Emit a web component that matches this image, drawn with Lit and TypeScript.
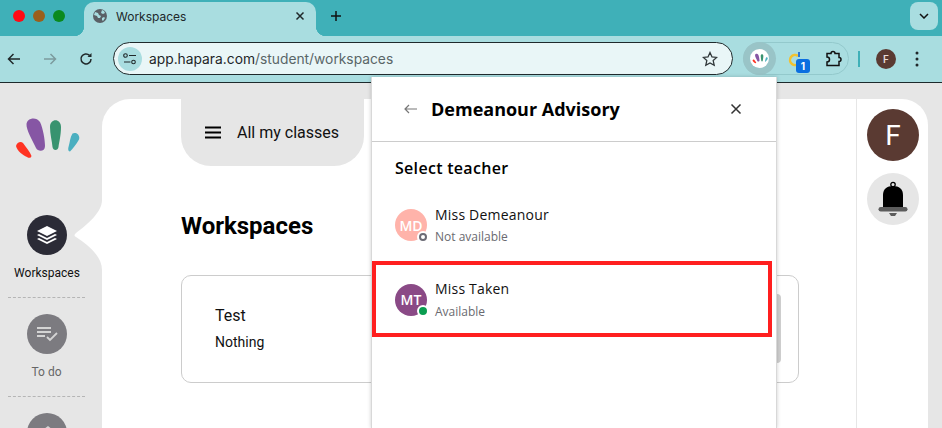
import { LitElement, html, css, svg } from "lit";
import { customElement } from "lit/decorators.js";

const logo = svg`
  <path fill="#ff3322" d="M16 146C17 142 21 141 23 143C26 147 30 152 31.5 156C31 158 29 158.5 27 157C23 155 17 151 16 146Z"/>
  <path fill="#8656a4" d="M26.5 124C27 118 36 116 40 122C43 128 45 140 45 146C45 152 38 152 36 148C33 141 26 130 26.5 124Z"/>
  <path fill="#38936f" d="M50 127C50 118 61 118 61 127C61 135 59 143 58.5 147C58 151 53 151 52.5 147C52 141 50 134 50 127Z"/>
  <path fill="#4bafc0" d="M68.500 147C70 142 70 137 72.500 133.500C76 131.500 80.500 135 79 139.500C76.500 144 72.500 149 70 151.500C68 151.500 68 149 68.500 147Z"/>`;

@customElement("app-root")
export class AppRoot extends LitElement {
  static styles = css`
    :host { display: block; width: 942px; height: 428px; overflow: hidden; position: relative; font-family: Roboto, sans-serif; background: #e6e6e6; }
    * { box-sizing: border-box; }
    svg { display: block; flex: none; }

    .strip { height: 36px; background: #3fb0b8; display: flex; align-items: flex-start; padding: 2px 4px 0 13px; }
    .dots { display: flex; gap: 8px; margin-top: 8px; width: 71px; flex: none; }
    .dot { width: 12px; height: 12px; border-radius: 50%; }
    .dot.red { background: #ff0a14; }
    .dot.amber { background: #9a5f1c; }
    .dot.green { background: #0a8a1e; }
    .tab { position: relative; width: 232px; height: 34px; background: #a9dde0; border-radius: 10px 10px 0 0; display: flex; align-items: center; padding: 0 11px 6px 9px; gap: 9px; font: 12px Inter, sans-serif; color: #20282a; flex: none; }
    .tab::before, .tab::after { content: ""; position: absolute; bottom: 0; width: 10px; height: 10px; }
    .tab::before { left: -10px; background: radial-gradient(circle at 0 0, transparent 10px, #a9dde0 10.5px); }
    .tab::after { right: -10px; background: radial-gradient(circle at 100% 0, transparent 10px, #a9dde0 10.5px); }
    .tab-title { flex: 1; }
    .plus { margin: 8px 0 0 14px; }
    .chev { margin-left: auto; width: 28px; height: 28px; border-radius: 8px; background: #a9dde0; display: flex; align-items: center; justify-content: center; }

    .bar { height: 47px; background: #a9dde0; border-bottom: 1px solid #1d2a2c; display: flex; align-items: center; padding: 0 0 1px 6px; }
    .nav { display: flex; gap: 20px; width: 107px; flex: none; }
    .omni { width: 620px; height: 33px; border-radius: 17px; border: 1px solid #1f2a2c; background: #e9f6f7; display: flex; align-items: center; padding: 0 14px 0 4px; font: 13.8px Inter, sans-serif; color: #5a6668; }
    .tune { width: 24px; height: 24px; border-radius: 50%; background: #a9dde0; display: flex; align-items: center; justify-content: center; margin-right: 7px; }
    .host { color: #1f2628; }
    .star { margin-left: auto; }
    .pill { margin-left: 10px; width: 106px; height: 33px; border: 1px solid #93c9cc; border-radius: 17px; display: flex; align-items: center; }
    .active { width: 33px; height: 33px; margin-left: -1px; border-radius: 50%; background: #99c4c7; display: flex; align-items: center; justify-content: center; }
    .mini { width: 19px; height: 19px; border-radius: 50%; background: #fff; display: flex; align-items: center; justify-content: center; }
    .ext { position: relative; margin-left: 11px; width: 30px; height: 30px; }
    .badge { position: absolute; left: 9px; top: 15px; width: 14px; height: 14px; border-radius: 3px; background: #0b6fe0; color: #fff; font: 700 10px Inter, sans-serif; display: flex; align-items: center; justify-content: center; }
    .puzzle { margin-left: 8px; }
    .sep { width: 2px; height: 16px; background: #3fb0b8; margin-left: 9px; }
    .prof { width: 20px; height: 20px; border-radius: 50%; background: #5a3a32; color: #e8dcd8; font: 600 10px Inter, sans-serif; display: flex; align-items: center; justify-content: center; margin-left: 16px; }
    .more { margin-left: 19px; }

    .app { height: 345px; display: flex; padding-top: 16px; }
    .side { width: 102px; flex: none; position: relative; margin-top: -16px; }
    .logo { position: absolute; left: 10px; top: 32px; }
    .notch { position: absolute; right: 0; top: 117px; }
    .items { position: absolute; left: 0; top: 132px; width: 93px; display: flex; flex-direction: column; align-items: stretch; }
    .item { display: flex; flex-direction: column; align-items: center; height: 99px; padding-left: 1px; font-size: 12px; color: #666; }
    .item + .item { border-top: 1px dashed #b5b5b5; margin-left: 8px; margin-right: 8px; padding-top: 16px; padding-left: 0; }
    .first { margin: 0 8px; height: 82px; color: #111; }
    .circle { width: 40px; height: 40px; flex: none; border-radius: 50%; background: #7c7b80; display: flex; align-items: center; justify-content: center; margin-bottom: 11px; }
    .circle.on { background: #2b2b36; }

    .main { flex: 1; background: #fff; border-radius: 28px 0 0 0; padding-left: 79px; padding-right: 57px; }
    .cls { width: 183px; height: 67px; background: #e6e6e6; border-radius: 0 0 30px 30px; display: flex; align-items: center; padding-left: 24px; gap: 16px; font-size: 16px; color: #111; }
    h1 { margin: 44px 0 33px; font: 700 24px/32px Roboto, sans-serif; color: #000; }
    .card { position: relative; height: 108px; border: 1px solid #ccc; border-radius: 10px; padding: 30px 33px; color: #111; }
    .card-t { font-size: 16px; line-height: 20px; margin-bottom: 7px; }
    .card-d { font-size: 14px; line-height: 18px; }
    .ghost { position: absolute; right: 17px; top: 18px; width: 30px; height: 69px; background: #cfcfcf; border-radius: 4px; }

    .right { width: 72px; margin-right: 14px; background: #fff; border-left: 1px solid #e6e6e6; border-radius: 0 26px 0 0; padding: 10px 0 0 10px; display: flex; flex-direction: column; gap: 12px; flex: none; }
    .big { width: 52px; height: 52px; border-radius: 50%; display: flex; align-items: center; justify-content: center; }
    .big.user { background: #5a3a32; color: #fff; font-size: 28px; }
    .big.bell { background: #e6e6e6; }

    .pop { position: absolute; left: 371px; top: 77px; width: 406px; height: 351px; background: #fff; border-left: 1px solid #d8d8d8; border-right: 1px solid #d8d8d8; box-shadow: 0 0 4px rgba(0,0,0,.2); font-family: "Open Sans", sans-serif; color: #000; }
    .pop-h { height: 65px; border-bottom: 1px solid #ccc; display: flex; align-items: center; padding: 0 34px 0 32px; }
    .pop-title { font-size: 18px; font-weight: 700; margin-left: 13px; flex: 1; }
    .pop-sel { font-size: 16px; font-weight: 600; line-height: 22px; letter-spacing: .3px; margin: 15px 0 0 23px; }
    .t { display: flex; align-items: center; gap: 8px; }
    .t1 { margin: 24px 0 0 23px; height: 44px; }
    .t2 { margin: 14px 4px 0 0; height: 76px; border: 4px solid #ff1f1f; padding: 1px 0 0 19px; }
    .t2 .sub { margin-top: 5px; }
    .av { position: relative; width: 32px; height: 32px; border-radius: 50%; color: #fff; font-weight: 600; font-size: 14px; display: flex; align-items: center; justify-content: center; flex: none; }
    .av.md { background: #ffb3aa; }
    .av.mt { background: #8a4a86; }
    .st { position: absolute; right: -2px; bottom: -1px; width: 12px; height: 12px; border-radius: 50%; border: 2px solid #fff; background: #0a9d50; }
    .st.off { background: #fff; border: 2px solid #6b6b75; box-shadow: 0 0 0 2px #fff; width: 8px; height: 8px; right: 0; bottom: 0; }
    .name { font-size: 14px; font-weight: 500; line-height: 20px; color: #111; letter-spacing: .2px; }
    .sub { font-size: 12px; line-height: 16px; color: #6a6a70; margin-top: 4px; }
  `;

  render() {
    return html`
      <div class="strip">
        <div class="dots">
          <div class="dot red"></div>
          <div class="dot amber"></div>
          <div class="dot green"></div>
        </div>
        <div class="tab">
          <svg width="14" height="14" viewBox="0 0 14 14"><circle cx="7" cy="7" r="7" fill="#5a6066"/><path d="M2 3l3 1 1 2 2 1-1 2 -2 0-1-2-3-1zM9 1l2 1 1 2-2 1-2-1zM9 9l2-1 1 1-2 3-1-1z" fill="#a9dde0"/></svg>
          <span class="tab-title">Workspaces</span>
          <svg width="10" height="10" viewBox="0 0 10 10"><path d="M1.500 1.500l7 7M8.500 1.500l-7 7" stroke="#20282a" stroke-width="1.500"/></svg>
        </div>
        <svg class="plus" width="12" height="12" viewBox="0 0 12 12"><path d="M6 1v10M1 6h10" stroke="#111" stroke-width="1.500"/></svg>
        <div class="chev"><svg width="10" height="6" viewBox="0 0 10 6"><path d="M1 1l4 4 4-4" fill="none" stroke="#111" stroke-width="1.500"/></svg></div>
      </div>

      <div class="bar">
        <div class="nav">
          <svg width="16" height="16" viewBox="0 0 16 16"><path d="M14 8H3M7.500 3L2.500 8l5 5" fill="none" stroke="#20282a" stroke-width="1.500"/></svg>
          <svg width="16" height="16" viewBox="0 0 16 16"><path d="M2 8h11M8.500 3l5 5-5 5" fill="none" stroke="#7c9a9d" stroke-width="1.500"/></svg>
          <svg width="16" height="16" viewBox="0 0 16 16"><path d="M13 8a5 5 0 1 1-1.500-3.600" fill="none" stroke="#20282a" stroke-width="1.500"/><path d="M13.500 2v4h-4z" fill="#20282a"/></svg>
        </div>
        <div class="omni">
          <div class="tune"><svg width="14" height="12" viewBox="0 0 14 12"><circle cx="2.500" cy="2.500" r="1.800" fill="none" stroke="#20282a" stroke-width="1.100"/><path d="M6 2.500h7M1 9h6.500" stroke="#20282a" stroke-width="1.100"/><circle cx="10.500" cy="9" r="1.800" fill="none" stroke="#20282a" stroke-width="1.100"/></svg></div>
          <span><span class="host">app.hapara.com</span>/student/workspaces</span>
          <svg class="star" width="16" height="16" viewBox="0 0 16 16"><path d="M8 1.500l2 4.400 4.700.5-3.500 3.200 1 4.700L8 11.900l-4.200 2.400 1-4.700L1.300 6.400l4.700-.5z" fill="none" stroke="#30383a" stroke-width="1.300"/></svg>
        </div>
        <div class="pill">
          <div class="active"><div class="mini"><svg width="17" height="12" viewBox="10 115 70 50">${logo}</svg></div></div>
          <div class="ext">
            <svg width="30" height="30" viewBox="0 0 30 30"><path d="M11 12a5 5 0 1 0 1 7" fill="none" stroke="#f2c230" stroke-width="2.500"/><path d="M12 8v5" stroke="#2a78d8" stroke-width="2"/></svg>
            <div class="badge">1</div>
          </div>
          <svg class="puzzle" width="18" height="18" viewBox="0 0 18 18"><path d="M2 3.500h4a2 2 0 0 1 4 0h4v4a2 2 0 0 1 0 4v4H2v-3.500a2 2 0 0 0 0-5z" fill="none" stroke="#111" stroke-width="1.500"/></svg>
        </div>
        <div class="sep"></div>
        <div class="prof">F</div>
        <svg class="more" width="4" height="16" viewBox="0 0 4 16"><circle cx="2" cy="2" r="1.500" fill="#20282a"/><circle cx="2" cy="8" r="1.500" fill="#20282a"/><circle cx="2" cy="14" r="1.500" fill="#20282a"/></svg>
      </div>

      <div class="app">
        <div class="side">
          <svg class="logo" width="70" height="50" viewBox="10 115 70 50">${logo}</svg>
          <svg class="notch" width="28" height="70" viewBox="0 0 28 70"><path d="M28 0C28 12 14 24 2 33C0 35 0 36 2 37C14 45 28 56 28 70Z" fill="#fff"/></svg>
          <div class="items">
            <div class="item first">
              <div class="circle on">
                <svg width="22" height="20" viewBox="0 0 22 20"><path d="M11 1l10 5-10 5L1 6z" fill="#fff"/><path d="M1 10l2-1 8 4 8-4 2 1-10 5zM1 14l2-1 8 4 8-4 2 1-10 5z" fill="#fff"/></svg>
              </div>
              <span>Workspaces</span>
            </div>
            <div class="item">
              <div class="circle">
                <svg width="22" height="16" viewBox="0 0 22 16"><path d="M1 2h14M1 6h14M1 10h8" stroke="#d4d4d4" stroke-width="2"/><path d="M11 11l3 3 7-7" fill="none" stroke="#d4d4d4" stroke-width="1.800"/></svg>
              </div>
              <span>To do</span>
            </div>
            <div class="item">
              <div class="circle">
                <svg width="22" height="22" viewBox="0 0 22 22"><path d="M8 7l4-3 5 4-4 4z" fill="#d4d4d4"/></svg>
              </div>
            </div>
          </div>
        </div>

        <div class="main">
          <div class="cls">
            <svg width="16" height="13" viewBox="0 0 16 13"><path d="M0 1.500h16M0 6.500h16M0 11.500h16" stroke="#000" stroke-width="2"/></svg>
            <span>All my classes</span>
          </div>
          <h1>Workspaces</h1>
          <div class="card">
            <div class="card-t">Test</div>
            <div class="card-d">Nothing</div>
            <div class="ghost"></div>
          </div>
        </div>

        <div class="right">
          <div class="big user">F</div>
          <div class="big bell">
            <svg width="30" height="36" viewBox="0 0 30 36"><circle cx="15" cy="3.500" r="2.200" fill="none" stroke="#000" stroke-width="1.300"/><path d="M5 26V14C5 8 9 5 15 5s10 3 10 9v12z" fill="#000"/><rect x="0.500" y="26" width="29" height="4.500" rx="2.200" fill="#5c5c5c"/><path d="M11 32h8l-2 3h-4z" fill="#5c5c5c"/></svg>
          </div>
        </div>
      </div>

      <div class="pop">
        <div class="pop-h">
          <svg width="14" height="10" viewBox="0 0 14 10"><path d="M13 5H1.500M5 1L1 5l4 4" fill="none" stroke="#777" stroke-width="1.200"/></svg>
          <div class="pop-title">Demeanour Advisory</div>
          <svg width="12" height="12" viewBox="0 0 12 12"><path d="M1.500 1.500l9 9M10.500 1.500l-9 9" stroke="#333" stroke-width="1.500"/></svg>
        </div>
        <div class="pop-sel">Select teacher</div>
        <div class="t t1">
          <div class="av md">MD<span class="st off"></span></div>
          <div><div class="name">Miss Demeanour</div><div class="sub">Not available</div></div>
        </div>
        <div class="t t2">
          <div class="av mt">MT<span class="st"></span></div>
          <div><div class="name">Miss Taken</div><div class="sub">Available</div></div>
        </div>
      </div>
    `;
  }
}
